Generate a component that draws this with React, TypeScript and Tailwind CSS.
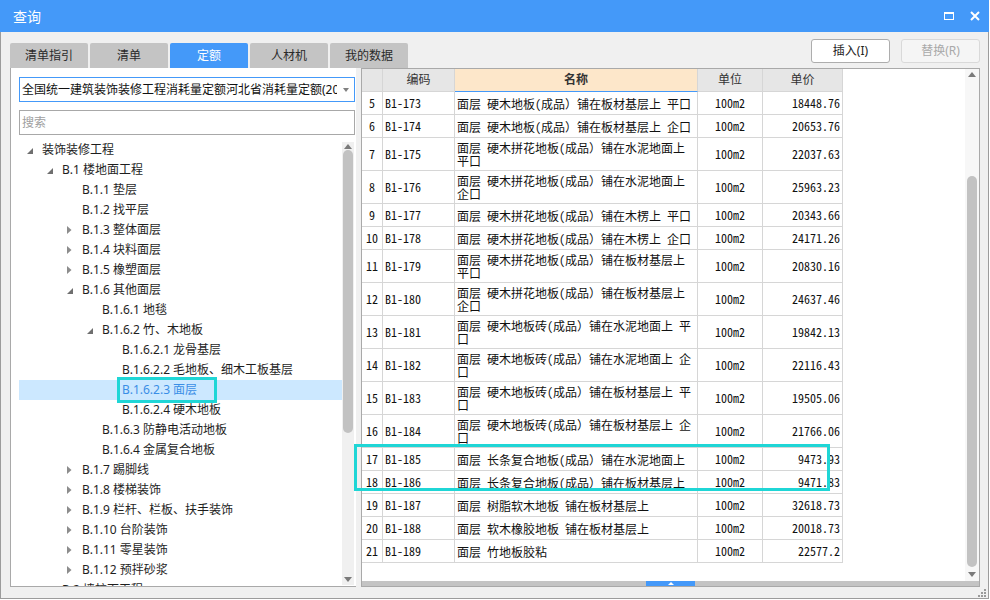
import React from 'react';

type TreeNode = { level: number; text: string; state?: 'open' | 'closed'; selected?: boolean };

const TREE: TreeNode[] = [
  { level: 0, text: '装饰装修工程', state: 'open' },
  { level: 1, text: 'B.1 楼地面工程', state: 'open' },
  { level: 2, text: 'B.1.1 垫层' },
  { level: 2, text: 'B.1.2 找平层' },
  { level: 2, text: 'B.1.3 整体面层', state: 'closed' },
  { level: 2, text: 'B.1.4 块料面层', state: 'closed' },
  { level: 2, text: 'B.1.5 橡塑面层', state: 'closed' },
  { level: 2, text: 'B.1.6 其他面层', state: 'open' },
  { level: 3, text: 'B.1.6.1 地毯' },
  { level: 3, text: 'B.1.6.2 竹、木地板', state: 'open' },
  { level: 4, text: 'B.1.6.2.1 龙骨基层' },
  { level: 4, text: 'B.1.6.2.2 毛地板、细木工板基层' },
  { level: 4, text: 'B.1.6.2.3 面层', selected: true },
  { level: 4, text: 'B.1.6.2.4 硬木地板' },
  { level: 3, text: 'B.1.6.3 防静电活动地板' },
  { level: 3, text: 'B.1.6.4 金属复合地板' },
  { level: 2, text: 'B.1.7 踢脚线', state: 'closed' },
  { level: 2, text: 'B.1.8 楼梯装饰', state: 'closed' },
  { level: 2, text: 'B.1.9 栏杆、栏板、扶手装饰', state: 'closed' },
  { level: 2, text: 'B.1.10 台阶装饰', state: 'closed' },
  { level: 2, text: 'B.1.11 零星装饰', state: 'closed' },
  { level: 2, text: 'B.1.12 预拌砂浆', state: 'closed' },
  { level: 1, text: 'B.2 墙柱面工程', state: 'closed' },
];

const INDENT = ['pl-[8px]', 'pl-[28px]', 'pl-[48px]', 'pl-[68px]', 'pl-[88px]'];

type Row = { no: number; code: string; name: string[]; price: string };

const ROWS: Row[] = [
  { no: 5,  code: 'B1-173', name: ['面层 硬木地板(成品）铺在板材基层上 平口'], price: '18448.76' },
  { no: 6,  code: 'B1-174', name: ['面层 硬木地板(成品）铺在板材基层上 企口'], price: '20653.76' },
  { no: 7,  code: 'B1-175', name: ['面层 硬木拼花地板(成品）铺在水泥地面上', '平口'], price: '22037.63' },
  { no: 8,  code: 'B1-176', name: ['面层 硬木拼花地板(成品）铺在水泥地面上', '企口'], price: '25963.23' },
  { no: 9,  code: 'B1-177', name: ['面层 硬木拼花地板(成品）铺在木楞上 平口'], price: '20343.66' },
  { no: 10, code: 'B1-178', name: ['面层 硬木拼花地板(成品）铺在木楞上 企口'], price: '24171.26' },
  { no: 11, code: 'B1-179', name: ['面层 硬木拼花地板(成品）铺在板材基层上', '平口'], price: '20830.16' },
  { no: 12, code: 'B1-180', name: ['面层 硬木拼花地板(成品）铺在板材基层上', '企口'], price: '24637.46' },
  { no: 13, code: 'B1-181', name: ['面层 硬木地板砖(成品）铺在水泥地面上 平', '口'], price: '19842.13' },
  { no: 14, code: 'B1-182', name: ['面层 硬木地板砖(成品）铺在水泥地面上 企', '口'], price: '22116.43' },
  { no: 15, code: 'B1-183', name: ['面层 硬木地板砖(成品）铺在板材基层上 平', '口'], price: '19505.06' },
  { no: 16, code: 'B1-184', name: ['面层 硬木地板砖(成品）铺在板材基层上 企', '口'], price: '21766.06' },
  { no: 17, code: 'B1-185', name: ['面层 长条复合地板(成品）铺在水泥地面上'], price: '9473.93' },
  { no: 18, code: 'B1-186', name: ['面层 长条复合地板(成品）铺在板材基层上'], price: '9471.83' },
  { no: 19, code: 'B1-187', name: ['面层 树脂软木地板 铺在板材基层上'], price: '32618.73' },
  { no: 20, code: 'B1-188', name: ['面层 软木橡胶地板 铺在板材基层上'], price: '20018.73' },
  { no: 21, code: 'B1-189', name: ['面层 竹地板胶粘'], price: '22577.2' },
];

const TABS = ['清单指引', '清单', '定额', '人材机', '我的数据'];

const MONO = "font-['Noto_Sans_Mono_CJK_SC','Liberation_Mono',monospace]";
const CELL = 'border-r border-b border-[#d6d6d6] flex items-center';

function UpArrow() {
  return (
    <svg width="8" height="5" viewBox="0 0 8 5"><polygon points="0,5 4,0 8,5" fill="#7a7a7a" /></svg>
  );
}

function DownArrow() {
  return (
    <svg width="8" height="5" viewBox="0 0 8 5"><polygon points="0,0 8,0 4,5" fill="#7a7a7a" /></svg>
  );
}

function TreeRow({ node }: { node: TreeNode }) {
  return (
    <div className={`h-[20px] flex items-center ${INDENT[node.level]} ${node.selected ? 'bg-[#cce8ff] text-[#3a8ee6]' : 'text-[#1e1e1e]'}`}>
      <div className="w-[15px] flex items-center">
        {node.state === 'open' && (
          <svg width="6" height="6" viewBox="0 0 6 6" className="mt-[2px]"><polygon points="6,0 6,6 0,6" fill="#6f6f6f" /></svg>
        )}
        {node.state === 'closed' && (
          <svg width="5" height="8" viewBox="0 0 5 8"><polygon points="0,0 4.5,4 0,8" fill="#8c8c8c" /></svg>
        )}
      </div>
      <span className="whitespace-nowrap">{node.text}</span>
    </div>
  );
}

export default function App() {
  return (
    <div className="relative w-[989px] h-[599px] flex flex-col bg-[#f0f0f0] border-x border-b border-[#9c9c9c] font-['Noto_Sans','Noto_Sans_CJK_SC',sans-serif] text-[12px] text-[#222]">
      {/* title bar */}
      <div className="-mx-px h-[32px] shrink-0 bg-[#4499f9] flex items-center justify-between pl-[13px] pr-[9px]">
        <span className="text-[14px] text-white">查询</span>
        <div className="flex items-center gap-[16px]">
          <div className="w-[10px] h-[8px] border border-white border-t-2" />
          <svg width="10" height="10" viewBox="0 0 10 10">
            <path d="M1 1 L9 9 M9 1 L1 9" stroke="#fff" strokeWidth="2" />
          </svg>
        </div>
      </div>

      {/* tabs + buttons */}
      <div className="h-[36px] shrink-0 flex justify-between">
        <div className="pl-[9px] pt-[11px] flex gap-[2px]">
          {TABS.map((t) => (
            <div
              key={t}
              className={`w-[78px] h-[25px] rounded-t-[2px] flex items-center justify-center ${t === '定额' ? 'bg-[#4499f9] text-white' : 'bg-[#c4c4c4] text-[#2a2a2a]'}`}
            >
              {t}
            </div>
          ))}
        </div>
        <div className="pt-[7px] pr-[8px] flex gap-[11px]">
          <div className="w-[79px] h-[24px] rounded-[3px] border border-[#adadad] bg-white flex items-center justify-center text-[#222]">插入(I)</div>
          <div className="w-[79px] h-[24px] rounded-[3px] border border-[#d9d9d9] bg-[#f5f5f5] flex items-center justify-center text-[#a9a9a9]">替换(R)</div>
        </div>
      </div>

      {/* main area */}
      <div className="h-[519px] shrink-0 flex">
        {/* left panel */}
        <div className="ml-[9px] w-[346px] h-full bg-white border-l border-b border-[#a9a9a9] flex flex-col">
          <div className="ml-[8px] mt-[9px] w-[336px] h-[25px] shrink-0 border border-[#4499f9] flex items-center">
            <div className="flex-1 overflow-hidden whitespace-nowrap pl-[2px] text-[#111]">全国统一建筑装饰装修工程消耗量定额河北省消耗量定额(2015)</div>
            <div className="w-[17px] flex justify-center">
              <svg width="6" height="4" viewBox="0 0 6 4"><polygon points="0,0 6,0 3,4" fill="#808080" /></svg>
            </div>
          </div>
          <div className="ml-[8px] mt-[8px] w-[336px] h-[25px] shrink-0 border border-[#a8a8a8] flex items-center pl-[2px] text-[#a0a0a0]">搜索</div>
          <div className="mt-[5px] flex-1 min-h-0 flex">
            <div className="ml-[8px] w-[323px] h-full overflow-hidden">
              {TREE.map((n) => <TreeRow key={n.text} node={n} />)}
            </div>
            <div className="mt-[2px] w-[12px] h-[443px] bg-[#f0f0f0] flex flex-col items-center">
              <div className="h-[8px] flex items-center"><UpArrow /></div>
              <div className="w-[10px] h-[283px] rounded-full bg-[#c2c2c2]" />
              <div className="flex-1 flex items-end pb-[3px]"><DownArrow /></div>
            </div>
          </div>
        </div>

        {/* right panel */}
        <div className="ml-[5px] w-[619px] h-full bg-white border border-[#a9a9a9] flex flex-col">
          <div className="flex-1 min-h-0 flex">
            <div className="w-[481px]">
              <div className="h-[23px] flex bg-[#e6e6e6] text-[#333]">
                <div className={`w-[21px] ${CELL}`} />
                <div className={`w-[72px] justify-center ${CELL}`}>编码</div>
                <div className="w-[243px] border-r border-b border-r-[#d6d6d6] border-b-[#4499f9] bg-[#fde7ca] flex items-center justify-center font-bold">名称</div>
                <div className={`w-[65px] justify-center ${CELL}`}>单位</div>
                <div className={`w-[80px] justify-center ${CELL}`}>单价</div>
              </div>
              {ROWS.map((r) => (
                <div key={r.no} className={`flex text-[#111] ${r.name.length > 1 ? 'h-[33px]' : 'h-[23px]'}`}>
                  <div className={`w-[21px] justify-center ${MONO} ${CELL}`}>{r.no}</div>
                  <div className={`w-[72px] pl-[2px] ${MONO} ${CELL}`}>{r.code}</div>
                  <div className={`w-[243px] pl-[2px] font-['Noto_Sans_Mono_CJK_SC','Noto_Sans_CJK_SC',sans-serif] ${CELL}`}>
                    <div className="leading-[13px] whitespace-pre">
                      {r.name.map((line) => <div key={line}>{line}</div>)}
                    </div>
                  </div>
                  <div className={`w-[65px] justify-center ${MONO} ${CELL}`}>100m2</div>
                  <div className={`w-[80px] justify-end pr-[2px] ${MONO} ${CELL}`}>{r.price}</div>
                </div>
              ))}
            </div>
            <div className="flex-1" />
            <div className="w-[14px] h-full bg-[#f7f7f7] flex flex-col items-center">
              <div className="h-[11px] flex items-center"><UpArrow /></div>
              <div className="h-[96px]" />
              <div className="w-[10px] h-[391px] rounded-full bg-[#c2c2c2]" />
              <div className="flex-1 flex items-center"><DownArrow /></div>
            </div>
          </div>
          <div className="h-[5px] shrink-0 bg-[#c4c4c4] flex">
            <div className="ml-[284px] w-[49px] h-full bg-[#4499f9] flex items-center justify-center">
              <svg width="6" height="3" viewBox="0 0 6 3"><polygon points="0,3 3,0 6,3" fill="#fff" /></svg>
            </div>
          </div>
        </div>
      </div>

      {/* bottom strip with resize grip */}
      <div className="flex-1 flex justify-end items-end pr-[2px] pb-[1px]">
        <svg width="9" height="9" viewBox="0 0 9 9" fill="#9a9a9a">
          <rect x="7" y="1" width="2" height="2" />
          <rect x="4" y="4" width="2" height="2" />
          <rect x="7" y="4" width="2" height="2" />
          <rect x="1" y="7" width="2" height="2" />
          <rect x="4" y="7" width="2" height="2" />
          <rect x="7" y="7" width="2" height="2" />
        </svg>
      </div>

      {/* highlight annotations */}
      <div className="absolute left-[116px] top-[377px] w-[100px] h-[26px] border-[3px] border-[#1fd6d6]" />
      <div className="absolute left-[353px] top-[444px] w-[476px] h-[47px] border-[3px] border-[#1fd6d6]" />
    </div>
  );
}
